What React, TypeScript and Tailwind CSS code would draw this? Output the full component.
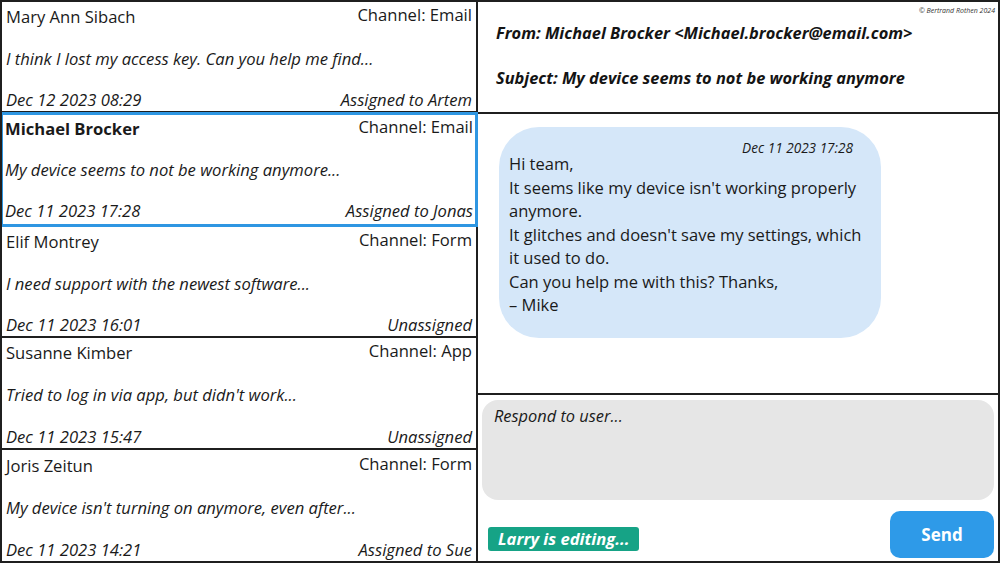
import React from 'react';

interface Ticket {
  name: string;
  channel: string;
  preview: string;
  date: string;
  assignee: string;
  selected?: boolean;
}

const tickets: Ticket[] = [
  { name: 'Mary Ann Sibach', channel: 'Email', preview: 'I think I lost my access key. Can you help me find...', date: 'Dec 12 2023 08:29', assignee: 'Assigned to Artem' },
  { name: 'Michael Brocker', channel: 'Email', preview: 'My device seems to not be working anymore...', date: 'Dec 11 2023 17:28', assignee: 'Assigned to Jonas', selected: true },
  { name: 'Elif Montrey', channel: 'Form', preview: 'I need support with the newest software...', date: 'Dec 11 2023 16:01', assignee: 'Unassigned' },
  { name: 'Susanne Kimber', channel: 'App', preview: "Tried to log in via app, but didn't work...", date: 'Dec 11 2023 15:47', assignee: 'Unassigned' },
  { name: 'Joris Zeitun', channel: 'Form', preview: "My device isn't turning on anymore, even after...", date: 'Dec 11 2023 14:21', assignee: 'Assigned to Sue' },
];

const TicketRow: React.FC<{ ticket: Ticket; last: boolean }> = ({ ticket, last }) => (
  <div
    className={`flex flex-col justify-between text-[16.6px] leading-[20px] text-[#1a1a1a] ${
      ticket.selected
        ? 'h-[115px] border-[3px] border-[#2e96e2] -mt-[1px] -ml-[2px] -mr-[2px] pl-[2px] pr-[2px] pt-[4px] pb-[3px] relative z-10'
        : last
        ? 'h-[112px] px-[4px] pt-[6px] pb-[1px]'
        : 'h-[112px] px-[4px] pt-[5px] pb-[1px] border-b-2 border-[#1f1f1f]'
    }`}
  >
    <div className="flex justify-between">
      <span className={ticket.selected ? 'font-bold' : ''}>{ticket.name}</span>
      <span className="-mt-[2px]">Channel: {ticket.channel}</span>
    </div>
    <div className="italic">{ticket.preview}</div>
    <div className="flex justify-between italic">
      <span>{ticket.date}</span>
      <span>{ticket.assignee}</span>
    </div>
  </div>
);

export default function App() {
  return (
    <div
      className="w-[1000px] h-[563px] bg-white border-2 border-[#1f1f1f] flex overflow-hidden"
      style={{ fontFamily: '"Open Sans", "Noto Sans", sans-serif' }}
    >
      <div className="w-[474px] flex flex-col">
        {tickets.map((t, i) => (
          <TicketRow key={t.name} ticket={t} last={i === tickets.length - 1} />
        ))}
      </div>

      <div className="flex-1 flex flex-col border-l-2 border-[#1f1f1f]">
        <div className="h-[112px] border-b-2 border-[#1f1f1f] relative pl-[18px] pt-[20px] text-[16.4px] leading-[22px] font-bold italic text-[#141414]">
          <span className="absolute top-[4px] right-[3px] text-[7px] leading-[9px] font-normal text-[#333]">
            © Bertrand Rothen 2024
          </span>
          <div>From: Michael Brocker &lt;Michael.brocker@email.com&gt;</div>
          <div className="mt-[23px]">Subject: My device seems to not be working anymore</div>
        </div>

        <div className="h-[281px] border-b-2 border-[#1f1f1f] pt-[13px] pl-[21px]">
          <div className="w-[382px] h-[211px] rounded-[40px] bg-[#d5e7f9] pl-[10px] pr-[16px] pt-[13px] text-[16.5px] leading-[23.5px] text-[#1a1a1a]">
            <div className="text-right text-[13.6px] leading-[16px] italic pr-[12px]">Dec 11 2023 17:28</div>
            <div className="-mt-[4px]">
              Hi team,
              <br />
              It seems like my device isn't working properly anymore.
              <br />
              It glitches and doesn't save my settings, which it used to do.
              <br />
              Can you help me with this? Thanks,
              <br />– Mike
            </div>
          </div>
        </div>

        <div className="flex-1 flex flex-col px-[4px] pt-[5px] pb-[3px]">
          <div className="h-[100px] rounded-[16px] bg-[#e6e6e6] px-[12px] pt-[5px] text-[16.4px] leading-[22px] italic text-[#1a1a1a]">
            Respond to user...
          </div>
          <div className="flex-1 flex justify-between items-end">
            <div className="mb-[7px] ml-[6px] h-[24px] px-[10px] rounded-[3px] bg-[#16a386] text-white text-[16.6px] leading-[24px] font-bold italic">
              Larry is editing...
            </div>
            <button className="w-[104px] h-[47px] rounded-[10px] bg-[#2e9ae8] text-white text-[17px] font-bold">
              Send
            </button>
          </div>
        </div>
      </div>
    </div>
  );
}
